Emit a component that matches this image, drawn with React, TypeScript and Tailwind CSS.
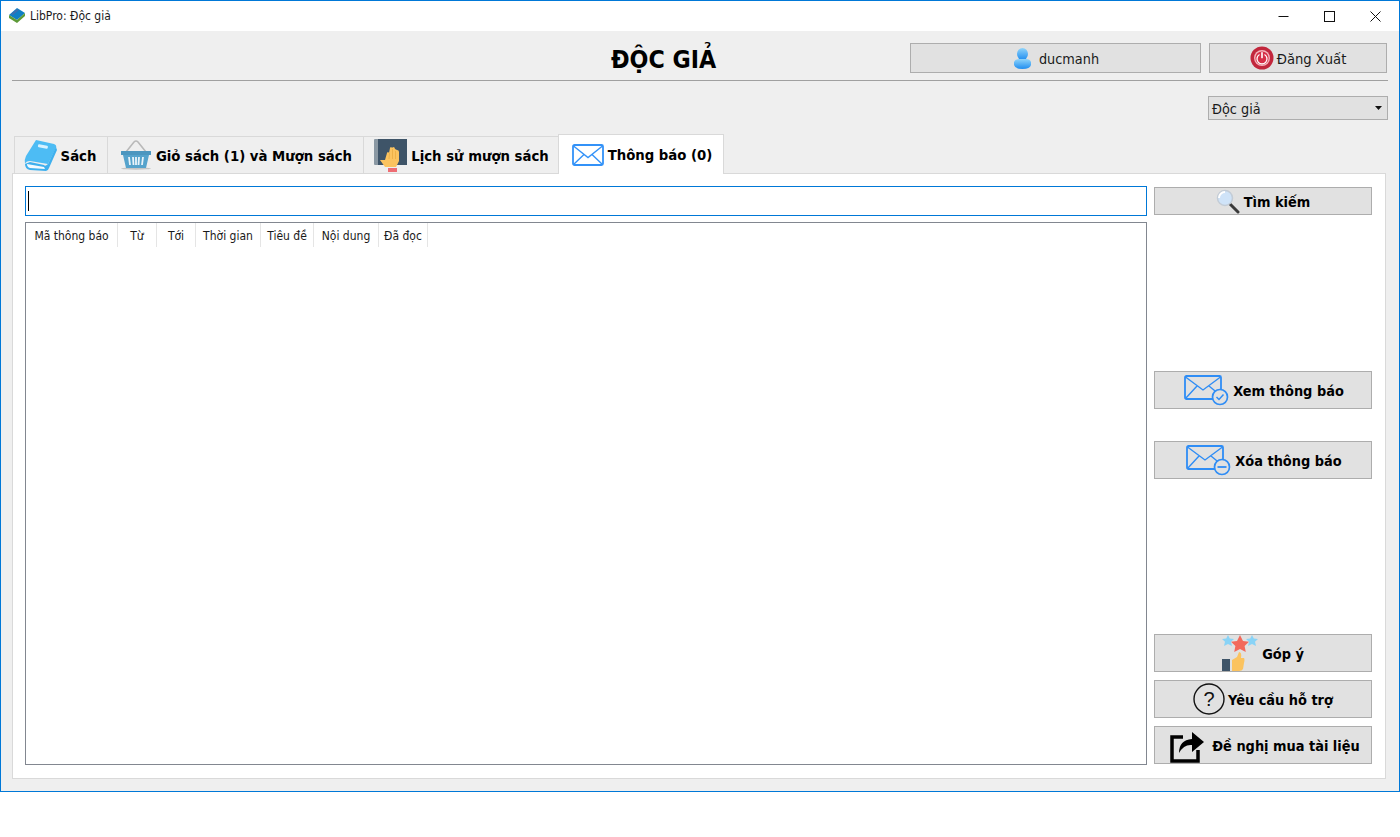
import React from 'react';

const bold = 'font-["DejaVu_Sans_Condensed","DejaVu_Sans",sans-serif] font-bold text-black';
const regular = 'font-["DejaVu_Sans_Condensed","DejaVu_Sans",sans-serif] text-[#1a1a1a]';

const BookIcon = () => (
  <svg width="33" height="31" viewBox="0 0 33 31" className="shrink-0">
    <path d="M12 0 L30 4 Q33 5 32 8 L24 24 L6 21 Q2 21 1 24 Q0 20 2 16 Z" fill="#4dbcf4" />
    <path d="M1 24 Q1 29 6 30 L22 31 Q24 31 25 28 L33 10 L32 7 L24 24 Q21 27 20 25 L6 22 Z" fill="#3fb0ee" />
    <path d="M3 24 L20 27 L21 29 L6 28 Q3 27 3 24 Z" fill="#f4fbff" />
    <rect x="14" y="5" width="10" height="3" rx="1" fill="#d8f2ff" transform="rotate(10 19 6)" />
  </svg>
);

const BasketIcon = () => (
  <svg width="32" height="30" viewBox="0 0 32 30" className="shrink-0">
    <path d="M6 12 L14 2 M26 12 L18 2 M14 2 Q16 0 18 2" stroke="#b9b9b9" strokeWidth="1.6" fill="none" />
    <ellipse cx="16" cy="28.5" rx="15" ry="1.2" fill="#c4c4c4" />
    <path d="M1 11 H31 V15 H29 L26 28 H6 L3 15 H1 Z" fill="#56a3cc" />
    <rect x="1" y="11" width="30" height="4" rx="1.5" fill="#4c96bf" />
    <path d="M9 17 L10 25 M13 17 L13.5 25 M16 17 V25 M19 17 L18.5 25 M23 17 L22 25" stroke="#eaf4fa" strokeWidth="1.8" />
  </svg>
);

const HandBookIcon = () => (
  <svg width="33" height="33" viewBox="0 0 33 33" className="shrink-0">
    <rect x="0" y="0" width="33" height="26" rx="1" fill="#8a98a3" />
    <rect x="4" y="0" width="29" height="26" fill="#3e5468" />
    <path d="M11 28 L6 21 L11 21 L13 14 Q14 12 15 14 L16 9 Q17 7 18 9 L19 8 Q21 8 21 10 L23 11 Q25 11 25 13 L25 22 L22 28 Z" fill="#fbc35f" />
    <path d="M15.5 14 L15 20 M18.5 10 V20 M21.5 12 V20" stroke="#e7a93f" strokeWidth="0.7" />
    <rect x="14" y="29" width="9" height="4" fill="#ee6d73" />
  </svg>
);

const EnvelopeIcon = ({ width, height }: { width: number; height: number }) => (
  <svg width={width} height={height} viewBox="0 0 32 22" className="shrink-0">
    <rect x="1" y="1" width="30" height="20" rx="1.5" fill="#fff" stroke="#3392f8" strokeWidth="1.8" />
    <path d="M1.5 2 L16 13.5 L30.5 2 M1.5 20.5 L12 10.5 M30.5 20.5 L20 10.5" fill="none" stroke="#3392f8" strokeWidth="1.4" />
  </svg>
);

const MailBadgeIcon = ({ kind }: { kind: 'check' | 'minus' }) => (
  <svg width="45" height="31" viewBox="0 0 45 31" className="shrink-0">
    <rect x="1" y="1" width="36" height="23" rx="1.5" fill="none" stroke="#2f8df5" strokeWidth="1.8" />
    <path d="M1.5 2 L19 15 L36.5 2 M1.5 23.5 L13 11 M36 20 L25 11" fill="none" stroke="#2f8df5" strokeWidth="1.4" />
    <circle cx="36" cy="22" r="7.5" fill="#e1e1e1" stroke="#2f8df5" strokeWidth="1.7" />
    {kind === 'check' ? (
      <path d="M32.5 22 L35 24.5 L39.5 19.5" fill="none" stroke="#2f8df5" strokeWidth="1.5" />
    ) : (
      <path d="M31.5 22 H40.5" fill="none" stroke="#2f8df5" strokeWidth="1.8" />
    )}
  </svg>
);

const UserIcon = () => (
  <svg width="17" height="21" viewBox="0 0 17 21" className="shrink-0">
    <defs>
      <linearGradient id="userFill" x1="0" y1="0" x2="0" y2="1">
        <stop offset="0" stopColor="#8fd4fa" />
        <stop offset="1" stopColor="#1f8df0" />
      </linearGradient>
    </defs>
    <ellipse cx="8.5" cy="6" rx="5.5" ry="6" fill="url(#userFill)" />
    <path d="M0 14 Q1 11 5 11 H12 Q16 11 17 14 V17 Q16 21 8.5 21 Q1 21 0 17 Z" fill="url(#userFill)" />
  </svg>
);

const PowerIcon = () => (
  <svg width="24" height="24" viewBox="0 0 24 24" className="shrink-0">
    <circle cx="12" cy="12" r="11.5" fill="#c2263c" />
    <circle cx="12" cy="12" r="8" fill="#f3b3bb" />
    <circle cx="12" cy="12" r="6.6" fill="#d62f47" />
    <path d="M9.5 8.5 A5 5 0 1 0 14.5 8.5" fill="none" stroke="#fff" strokeWidth="1.3" />
    <rect x="11.2" y="6.2" width="1.6" height="6" fill="#fff" />
  </svg>
);

const SearchIcon = () => (
  <svg width="24" height="25" viewBox="0 0 24 25" className="shrink-0">
    <path d="M14 15 L22 23" stroke="#3a3a3a" strokeWidth="3" strokeLinecap="round" />
    <circle cx="9" cy="9" r="7.5" fill="#cfe3f8" stroke="#c3ccd6" strokeWidth="1.5" />
    <path d="M3 9 A6 6 0 0 1 9 3" fill="none" stroke="#fff" strokeWidth="2" />
  </svg>
);

const FeedbackIcon = () => (
  <svg width="36" height="37" viewBox="0 0 36 37" className="shrink-0">
    <path d="M6 0 L7.8 3.6 L12 4 L9 6.8 L10 11 L6 9 L2 11 L3 6.8 L0 4 L4.2 3.6 Z" fill="#89d3f6" />
    <path d="M30 0 L31.8 3.6 L36 4 L33 6.8 L34 11 L30 9 L26 11 L27 6.8 L24 4 L28.2 3.6 Z" fill="#89d3f6" />
    <path d="M18 0 L21 6 L27 6.8 L22.6 11 L23.8 17 L18 14 L12.2 17 L13.4 11 L9 6.8 L15 6 Z" fill="#f2695b" />
    <rect x="0" y="24" width="8" height="12" fill="#3e5468" />
    <path d="M10 25 L15 22 L17 17 Q20 17 19 23 L22 23 Q23 24 22 28 L21 34 Q20 36 17 36 H10 Z" fill="#fbc35f" />
  </svg>
);

const HelpIcon = () => (
  <svg width="32" height="32" viewBox="0 0 32 32" className="shrink-0">
    <circle cx="16" cy="16" r="15" fill="none" stroke="#111" strokeWidth="1.4" />
    <text x="16" y="23" textAnchor="middle" fontSize="20" fontFamily="Liberation Sans" fill="#111">?</text>
  </svg>
);

const ShareIcon = () => (
  <svg width="34" height="35" viewBox="0 0 34 35" className="shrink-0">
    <path d="M13 9 H2 V33 H28 V22" fill="none" stroke="#000" strokeWidth="3.5" />
    <path d="M9 25 Q9 12 22 11 V4 L34 14 L22 24 V17 Q14 16 9 25 Z" fill="#000" />
  </svg>
);

const Button = ({ icon, label, gap = 'gap-1', className = '' }: { icon?: React.ReactNode; label: string; gap?: string; className?: string }) => (
  <div className={`w-[218px] flex items-center justify-center bg-[#e1e1e1] border border-[#adadad] overflow-hidden ${gap} ${className}`}>
    {icon}
    <span className={`${bold} text-[14.4px] leading-none whitespace-nowrap pt-[2px]`}>{label}</span>
  </div>
);

const columns = [
  { label: 'Mã thông báo', width: 'w-[92px]' },
  { label: 'Từ', width: 'w-[39px]' },
  { label: 'Tới', width: 'w-[39px]' },
  { label: 'Thời gian', width: 'w-[65px]' },
  { label: 'Tiêu đề', width: 'w-[53px]' },
  { label: 'Nội dung', width: 'w-[65px]' },
  { label: 'Đã đọc', width: 'w-[49px]' },
];

const tabs = [
  { label: 'Sách', icon: <BookIcon />, width: 'w-[94px] pr-[2px]', gap: 'gap-[4px]' },
  { label: 'Giỏ sách (1) và Mượn sách', icon: <BasketIcon />, width: 'w-[257px] pl-[1px]', gap: 'gap-[4px]' },
  { label: 'Lịch sử mượn sách', icon: <HandBookIcon />, width: 'w-[196px] pl-[1px]', gap: 'gap-[4px]' },
];

const App: React.FC = () => {
  return (
    <div className="w-[1400px] h-[837px] bg-white overflow-hidden">
      <div className="h-[792px] border border-[#0078d7] flex flex-col">
        {/* Title bar */}
        <div className="h-[30px] bg-white flex items-center">
          <svg width="18" height="16" viewBox="0 0 18 16" className="ml-[7px] shrink-0">
            <path d="M9 0 L17 5 L9 12 L1 7 Z" fill="#0f7fc4" />
            <path d="M1 7 L9 12 L17 5 V8 L9 15 L1 10 Z" fill="#5d9a38" />
            <path d="M3 6 L9 1 L11 2 L5 7 Z" fill="#3d6fb0" />
          </svg>
          <span className={`${regular} text-[12px] ml-[4px]`}>LibPro: Độc giả</span>
          <div className="ml-auto flex items-center pr-[18px] gap-[35px]">
            <svg width="11" height="11" viewBox="0 0 11 11"><path d="M0.5 5.5 H10.5" stroke="#111" /></svg>
            <svg width="11" height="11" viewBox="0 0 11 11"><rect x="0.5" y="0.5" width="10" height="10" fill="none" stroke="#111" /></svg>
            <svg width="11" height="11" viewBox="0 0 11 11"><path d="M0.5 0.5 L10.5 10.5 M10.5 0.5 L0.5 10.5" stroke="#111" /></svg>
          </div>
        </div>

        <div className="flex-1 bg-[#efefef] px-[11px] flex flex-col">
          {/* Header */}
          <div className="h-[50px] border-b border-[#a0a0a0] flex items-start pt-[12px]">
            <div className={`${bold} text-[24.7px] leading-[34px] w-[898px] pl-[599px] whitespace-nowrap`}>ĐỘC GIẢ</div>
            <div className="w-[291px] h-[30px] bg-[#e1e1e1] border border-[#adadad] flex items-center justify-center gap-[8px] pl-[2px]">
              <UserIcon />
              <span className={`${regular} text-[14.3px] leading-none pt-[2px]`}>ducmanh</span>
            </div>
            <div className="w-[178px] h-[30px] bg-[#e1e1e1] border border-[#adadad] flex items-center justify-center gap-[3px] ml-[8px]">
              <PowerIcon />
              <span className={`${regular} text-[14.6px] leading-none pt-[2px]`}>Đăng Xuất</span>
            </div>
          </div>

          <div className="flex justify-end mt-[15px]">
            <div className="w-[180px] h-[24px] bg-[#e1e1e1] border border-[#adadad] flex items-center justify-between pl-[3px] pr-[5px]">
              <span className={`${regular} text-[14.3px] leading-none pt-[2px]`}>Độc giả</span>
              <svg width="7" height="4" viewBox="0 0 7 4"><path d="M0 0 H7 L3.5 4 Z" fill="#111" /></svg>
            </div>
          </div>

          {/* Tabs */}
          <div className="flex items-end h-[40px] mt-[13px] pl-[2px] relative z-10">
            {tabs.map(tab => (
              <div
                key={tab.label}
                className={`${tab.width} h-[37px] bg-[#efefef] border border-[#d9d9d9] border-b-0 -mr-[1px] flex items-center justify-center ${tab.gap}`}
              >
                {tab.icon}
                <span className={`${bold} text-[14.75px] leading-none whitespace-nowrap pt-[2px]`}>{tab.label}</span>
              </div>
            ))}
            <div className="w-[166px] h-[40px] bg-white border border-[#d9d9d9] border-b-0 -mb-[1px] flex items-center justify-center gap-[4px] pl-[2px]">
              <EnvelopeIcon width={32} height={22} />
              <span className={`${bold} text-[14.75px] leading-none whitespace-nowrap pt-[2px]`}>Thông báo (0)</span>
            </div>
          </div>

          {/* Tab pane */}
          <div className="h-[606px] w-[1374px] bg-white border border-[#d9d9d9] p-[12px] flex gap-[7px]">
            <div className="w-[1122px] flex flex-col gap-[6px] pb-[1px]">
              <div className="h-[30px] border border-[#0078d7] flex items-center pl-[2px]">
                <div className="w-px h-[20px] bg-black" />
              </div>
              <div className="flex-1 border border-[#828790]">
                <div className="flex h-[24px]">
                  {columns.map(col => (
                    <div key={col.label} className={`${col.width} border-r border-[#e5e5e5] flex items-center justify-center`}>
                      <span className={`${regular} text-[12px] leading-none whitespace-nowrap pt-[2px]`}>{col.label}</span>
                    </div>
                  ))}
                </div>
              </div>
            </div>

            <div className="w-[218px] flex flex-col pt-[1px] pb-0">
              <Button icon={<SearchIcon />} label="Tìm kiếm" gap="gap-[4px]" className="h-[28px]" />
              <Button icon={<MailBadgeIcon kind="check" />} label="Xem thông báo" gap="gap-[4px]" className="h-[38px] mt-[156px] pl-[2px]" />
              <Button icon={<MailBadgeIcon kind="minus" />} label="Xóa thông báo" gap="gap-[4px]" className="h-[38px] mt-[32px] pl-[2px]" />
              <Button icon={<FeedbackIcon />} label="Góp ý" gap="gap-[4px]" className="h-[38px] mt-[155px]" />
              <Button icon={<HelpIcon />} label="Yêu cầu hỗ trợ" gap="gap-[3px]" className="h-[38px] mt-[8px]" />
              <Button icon={<ShareIcon />} label="Đề nghị mua tài liệu" gap="gap-[8px]" className="h-[38px] mt-[8px] pl-[4px]" />
            </div>
          </div>
        </div>
      </div>
    </div>
  );
};

export default App;
